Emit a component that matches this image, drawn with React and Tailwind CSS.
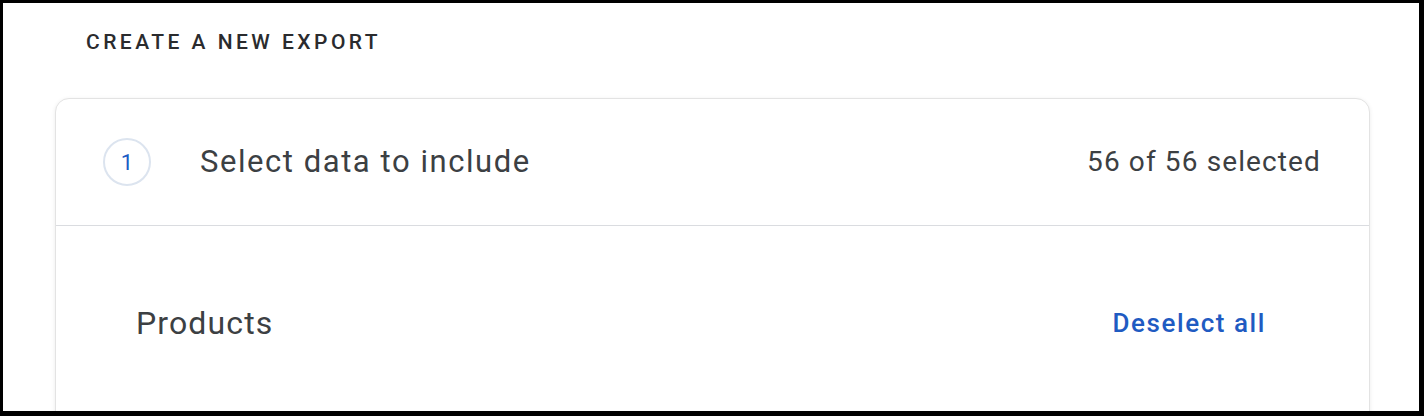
import React from 'react';

const App = () => {
  return (
    <div className="h-[416px] overflow-hidden bg-black pl-[3px] pt-[3px] pr-[5px] pb-[5px]" style={{ fontFamily: 'Roboto, "Liberation Sans", sans-serif' }}>
      <div className="h-full overflow-hidden bg-white">
        <h1 className="pl-[83px] pt-[27px] text-[21px] font-medium tracking-[0.165em] text-[#2a2b2e] leading-[24px]">
          CREATE A NEW EXPORT
        </h1>

        {/* Export card */}
        <div className="ml-[52px] mr-[49px] mt-[44px] h-[400px] rounded-[14px] border border-[#e3e3e3] bg-white shadow-[0_1px_4px_rgba(0,0,0,0.08)]">
          <div className="flex h-[127px] items-center justify-between border-b border-[#dadce0] pl-[47px] pr-[48px]">
            <div className="flex items-center">
              <div className="flex h-[48px] w-[48px] items-center justify-center rounded-full border-2 border-[#dce4ef] text-[22px] text-[#1a5cc4]">
                1
              </div>
              <span className="ml-[49px] text-[31px] tracking-[0.05em] text-[#3c4043]">Select data to include</span>
            </div>
            <span className="text-[28px] tracking-[0.04em] text-[#3c4043]">56 of 56 selected</span>
          </div>

          <div className="flex items-center justify-between pl-[80px] pr-[103px] pt-[73px]">
            <span className="text-[32px] tracking-[0.035em] text-[#3c4043]">Products</span>
            <button className="text-[26px] font-medium tracking-[0.06em] text-[#1f5bc2]">Deselect all</button>
          </div>
        </div>
      </div>
    </div>
  );
};

export default App;
